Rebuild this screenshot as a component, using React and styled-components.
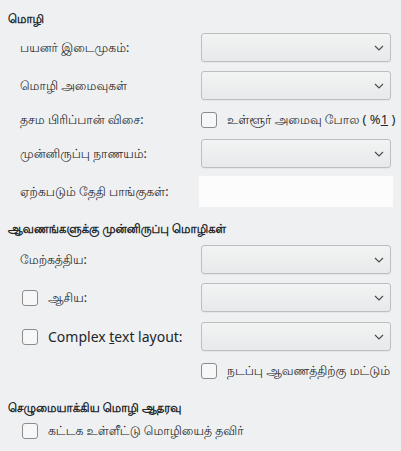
import styled, { createGlobalStyle } from "styled-components";

const GlobalStyle = createGlobalStyle`
  html, body {
    margin: 0;
    padding: 0;
    background: #eff0f1;
  }
  body {
    font-family: "Noto Sans", "Lohit Tamil", sans-serif;
    font-size: 12.3px;
    color: #232629;
  }
`;

const Page = styled.div`
  width: 401px;
  height: 451px;
  box-sizing: border-box;
  padding: 8px 8px 0 8px;
  background: #eff0f1;
  display: flex;
  flex-direction: column;
  overflow: hidden;
`;

const SectionTitle = styled.div`
  height: 20px;
  display: flex;
  align-items: center;
  font-weight: bold;
  font-size: 11.7px;
  white-space: nowrap;
  margin-top: ${(p) => p.$top || 0}px;
  margin-bottom: ${(p) => p.$bottom || 0}px;
`;

const Row = styled.div`
  display: grid;
  grid-template-columns: 193px 190px;
  align-items: center;
  height: ${(p) => p.$h || 29}px;
  margin-top: ${(p) => p.$top || 0}px;
`;

const Label = styled.div`
  padding-left: 12px;
  white-space: nowrap;
`;

const Latin = styled.span`
  font-size: ${(p) => p.$size || 14}px;
`;

const ComboBox = styled.div`
  height: 29px;
  box-sizing: border-box;
  border: 1px solid #bcbebf;
  border-radius: 3px;
  background: linear-gradient(#f2f3f3, #e8e9ea);
  display: flex;
  align-items: center;
  justify-content: flex-end;
  padding-right: 6px;
  box-shadow: 0 1px 0 rgba(0, 0, 0, 0.04);
`;

const LineEdit = styled.div`
  height: 31px;
  margin: 0 -2px;
  background: #fcfcfc;
`;

const CheckLine = styled.label`
  display: flex;
  align-items: center;
  gap: 10px;
  white-space: nowrap;
  padding-left: ${(p) => p.$indent || 0}px;
`;

const Box = styled.span`
  width: 16px;
  height: 16px;
  box-sizing: border-box;
  border: 1px solid #8a8c8e;
  border-radius: 3px;
  background: #f7f7f7;
  flex-shrink: 0;
`;

const Chevron = () => (
  <svg width="10" height="6" viewBox="0 0 10 6">
    <path d="M1 1 L5 5 L9 1" fill="none" stroke="#4d4f51" strokeWidth="1.2" />
  </svg>
);

const Combo = () => (
  <ComboBox>
    <Chevron />
  </ComboBox>
);

const Check = ({ children, indent }) => (
  <CheckLine $indent={indent}>
    <Box />
    <span>{children}</span>
  </CheckLine>
);

export default function App() {
  return (
    <>
      <GlobalStyle />
      <Page>
        <SectionTitle $bottom={5}>மொழி</SectionTitle>
        <Row>
          <Label>பயனர் இடைமுகம்:</Label>
          <Combo />
        </Row>
        <Row $top={9}>
          <Label>மொழி அமைவுகள்</Label>
          <Combo />
        </Row>
        <Row $top={9} $h={21}>
          <Label>தசம பிரிப்பான் விசை:</Label>
          <Check>
            உள்ளூர் அமைவு போல{" "}
            <Latin $size={13}>
              ( %<u>1</u> )
            </Latin>
          </Check>
        </Row>
        <Row $top={9}>
          <Label>முன்னிருப்பு நாணயம்:</Label>
          <Combo />
        </Row>
        <Row $top={8} $h={31}>
          <Label>ஏற்கபடும் தேதி பாங்குகள்:</Label>
          <LineEdit />
        </Row>

        <SectionTitle $top={11} $bottom={7}>
          ஆவணங்களுக்கு முன்னிருப்பு மொழிகள்
        </SectionTitle>
        <Row>
          <Label>மேற்கத்திய:</Label>
          <Combo />
        </Row>
        <Row $top={9}>
          <Check indent={14}>ஆசிய:</Check>
          <Combo />
        </Row>
        <Row $top={10}>
          <Check indent={14}>
            <Latin>
              Complex <u>t</u>ext layout:
            </Latin>
          </Check>
          <Combo />
        </Row>
        <Row $top={9} $h={21}>
          <span />
          <Check>நடப்பு ஆவணத்திற்கு மட்டும்</Check>
        </Row>

        <SectionTitle $top={16} $bottom={3}>
          செழுமையாக்கிய மொழி ஆதரவு
        </SectionTitle>
        <Row $h={21}>
          <Check indent={14}>கட்டக உள்ளீட்டு மொழியைத் தவிர்</Check>
        </Row>
      </Page>
    </>
  );
}
